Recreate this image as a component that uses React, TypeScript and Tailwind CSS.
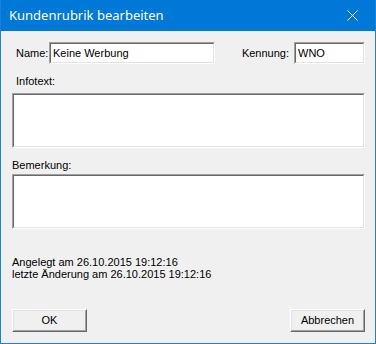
import React from "react";

const sunken =
  "border-t border-l border-t-[#a0a0a0] border-l-[#a0a0a0] border-b border-r border-b-white border-r-white";
const sunkenInner =
  "border-t border-l border-t-[#696969] border-l-[#696969] border-b border-r border-b-[#e3e3e3] border-r-[#e3e3e3] bg-white";

function Field({ value, className }: { value?: string; className: string }) {
  return (
    <div className={`${sunken} ${className}`}>
      <div className={`${sunkenInner} h-full w-full flex items-center pl-[2px] text-black`}>{value}</div>
    </div>
  );
}

function Button({ label }: { label: string }) {
  return (
    <div className="w-[75px] h-[23px] border-t border-l border-t-white border-l-white border-b border-r border-b-[#696969] border-r-[#696969]">
      <div className="h-full w-full border-b border-r border-b-[#a0a0a0] border-r-[#a0a0a0] border-t border-l border-t-[#e3e3e3] border-l-[#e3e3e3] bg-[#f0f0f0] flex items-center justify-center">
        {label}
      </div>
    </div>
  );
}

export default function App() {
  return (
    <div className="w-[376px] h-[344px] bg-[#1883d7] px-px pb-px flex flex-col">
      {/* Title bar */}
      <div className="h-[31px] flex items-center justify-between bg-[#0078d7] text-white">
        <span className="pl-[8px] text-[13px] font-['Segoe_UI','Noto_Sans',sans-serif]">Kundenrubrik bearbeiten</span>
        <div className="w-[46px] h-full flex items-center justify-center">
          <svg width="11" height="11" viewBox="0 0 11 11">
            <path d="M0.5 0.5 L10.5 10.5 M10.5 0.5 L0.5 10.5" stroke="white" strokeWidth="1" fill="none" />
          </svg>
        </div>
      </div>

      {/* Client area */}
      <div className="flex-1 bg-[#f0f0f0] pl-[11px] pr-[10px] flex flex-col text-[11px] leading-[13px] text-black font-['Liberation_Sans',Arial,sans-serif]">
        <div className="mt-[11px] h-[22px] flex items-center">
          <span className="pl-[4px] w-[37px]">Name:</span>
          <Field value="Keine Werbung" className="w-[166px] h-full" />
          <div className="flex-1" />
          <span className="mr-[5px]">Kennung:</span>
          <Field value="WNO" className="w-[71px] h-full" />
        </div>

        <span className="mt-[11px] pl-[4px]">Infotext:</span>
        <Field className="mt-[5px] h-[55px] w-full" />

        <span className="mt-[11px]">Bemerkung:</span>
        <Field className="mt-[2px] h-[55px] w-full" />

        <div className="mt-[27px] flex flex-col leading-[12px]">
          <span>Angelegt am 26.10.2015 19:12:16</span>
          <span>letzte Änderung am 26.10.2015 19:12:16</span>
        </div>

        <div className="mt-auto mb-[11px] flex justify-between">
          <Button label="OK" />
          <Button label="Abbrechen" />
        </div>
      </div>
    </div>
  );
}
